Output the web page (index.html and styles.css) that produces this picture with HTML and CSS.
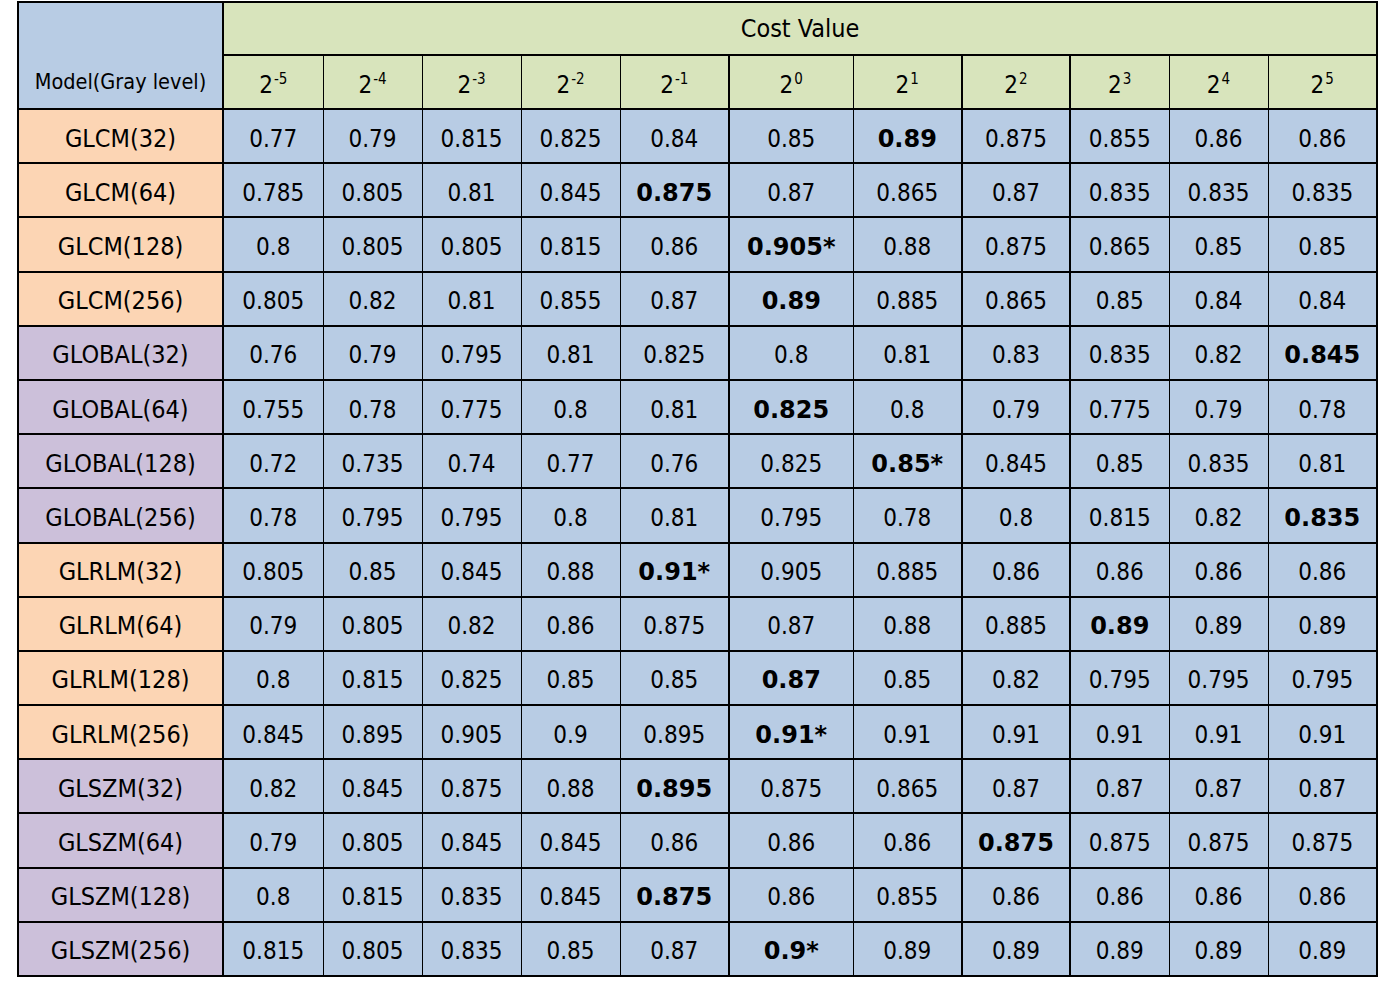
FILE: index.html
```html
<!DOCTYPE html>
<html>
<head>
<meta charset="utf-8">
<link rel="stylesheet" href="styles.css">
</head>
<body>
<table class="grid">
  <colgroup>
    <col class="c-model">
    <col class="c-100"><col class="c-99"><col class="c-99"><col class="c-99">
    <col class="c-109"><col class="c-124"><col class="c-109"><col class="c-108">
    <col class="c-99"><col class="c-99"><col class="c-109">
  </colgroup>
  <thead>
    <tr class="h1">
      <th class="model-head" rowspan="2">Model(Gray level)</th>
      <th class="cost" colspan="11">Cost Value</th>
    </tr>
    <tr class="h2">
      <th>2<sup>-5</sup></th>
      <th>2<sup>-4</sup></th>
      <th>2<sup>-3</sup></th>
      <th>2<sup>-2</sup></th>
      <th>2<sup>-1</sup></th>
      <th class="tl">2<sup>0</sup></th>
      <th>2<sup>1</sup></th>
      <th class="tl">2<sup>2</sup></th>
      <th class="tl">2<sup>3</sup></th>
      <th>2<sup>4</sup></th>
      <th>2<sup>5</sup></th>
    </tr>
  </thead>
  <tbody>
    <tr class="o"><td class="m">GLCM(32)</td><td>0.77</td><td>0.79</td><td>0.815</td><td>0.825</td><td>0.84</td><td class="tl">0.85</td><td><b>0.89</b></td><td class="tl">0.875</td><td class="tl">0.855</td><td>0.86</td><td>0.86</td></tr>
    <tr class="o"><td class="m">GLCM(64)</td><td>0.785</td><td>0.805</td><td>0.81</td><td>0.845</td><td><b>0.875</b></td><td class="tl">0.87</td><td>0.865</td><td class="tl">0.87</td><td class="tl">0.835</td><td>0.835</td><td>0.835</td></tr>
    <tr class="o"><td class="m">GLCM(128)</td><td>0.8</td><td>0.805</td><td>0.805</td><td>0.815</td><td>0.86</td><td class="tl"><b>0.905*</b></td><td>0.88</td><td class="tl">0.875</td><td class="tl">0.865</td><td>0.85</td><td>0.85</td></tr>
    <tr class="o"><td class="m">GLCM(256)</td><td>0.805</td><td>0.82</td><td>0.81</td><td>0.855</td><td>0.87</td><td class="tl"><b>0.89</b></td><td>0.885</td><td class="tl">0.865</td><td class="tl">0.85</td><td>0.84</td><td>0.84</td></tr>
    <tr class="p"><td class="m">GLOBAL(32)</td><td>0.76</td><td>0.79</td><td>0.795</td><td>0.81</td><td>0.825</td><td class="tl">0.8</td><td>0.81</td><td class="tl">0.83</td><td class="tl">0.835</td><td>0.82</td><td><b>0.845</b></td></tr>
    <tr class="p"><td class="m">GLOBAL(64)</td><td>0.755</td><td>0.78</td><td>0.775</td><td>0.8</td><td>0.81</td><td class="tl"><b>0.825</b></td><td>0.8</td><td class="tl">0.79</td><td class="tl">0.775</td><td>0.79</td><td>0.78</td></tr>
    <tr class="p"><td class="m">GLOBAL(128)</td><td>0.72</td><td>0.735</td><td>0.74</td><td>0.77</td><td>0.76</td><td class="tl">0.825</td><td><b>0.85*</b></td><td class="tl">0.845</td><td class="tl">0.85</td><td>0.835</td><td>0.81</td></tr>
    <tr class="p"><td class="m">GLOBAL(256)</td><td>0.78</td><td>0.795</td><td>0.795</td><td>0.8</td><td>0.81</td><td class="tl">0.795</td><td>0.78</td><td class="tl">0.8</td><td class="tl">0.815</td><td>0.82</td><td><b>0.835</b></td></tr>
    <tr class="o"><td class="m">GLRLM(32)</td><td>0.805</td><td>0.85</td><td>0.845</td><td>0.88</td><td><b>0.91*</b></td><td class="tl">0.905</td><td>0.885</td><td class="tl">0.86</td><td class="tl">0.86</td><td>0.86</td><td>0.86</td></tr>
    <tr class="o"><td class="m">GLRLM(64)</td><td>0.79</td><td>0.805</td><td>0.82</td><td>0.86</td><td>0.875</td><td class="tl">0.87</td><td>0.88</td><td class="tl">0.885</td><td class="tl"><b>0.89</b></td><td>0.89</td><td>0.89</td></tr>
    <tr class="o"><td class="m">GLRLM(128)</td><td>0.8</td><td>0.815</td><td>0.825</td><td>0.85</td><td>0.85</td><td class="tl"><b>0.87</b></td><td>0.85</td><td class="tl">0.82</td><td class="tl">0.795</td><td>0.795</td><td>0.795</td></tr>
    <tr class="o"><td class="m">GLRLM(256)</td><td>0.845</td><td>0.895</td><td>0.905</td><td>0.9</td><td>0.895</td><td class="tl"><b>0.91*</b></td><td>0.91</td><td class="tl">0.91</td><td class="tl">0.91</td><td>0.91</td><td>0.91</td></tr>
    <tr class="p"><td class="m">GLSZM(32)</td><td>0.82</td><td>0.845</td><td>0.875</td><td>0.88</td><td><b>0.895</b></td><td class="tl">0.875</td><td>0.865</td><td class="tl">0.87</td><td class="tl">0.87</td><td>0.87</td><td>0.87</td></tr>
    <tr class="p"><td class="m">GLSZM(64)</td><td>0.79</td><td>0.805</td><td>0.845</td><td>0.845</td><td>0.86</td><td class="tl">0.86</td><td>0.86</td><td class="tl"><b>0.875</b></td><td class="tl">0.875</td><td>0.875</td><td>0.875</td></tr>
    <tr class="p"><td class="m">GLSZM(128)</td><td>0.8</td><td>0.815</td><td>0.835</td><td>0.845</td><td><b>0.875</b></td><td class="tl">0.86</td><td>0.855</td><td class="tl">0.86</td><td class="tl">0.86</td><td>0.86</td><td>0.86</td></tr>
    <tr class="p"><td class="m">GLSZM(256)</td><td>0.815</td><td>0.805</td><td>0.835</td><td>0.85</td><td>0.87</td><td class="tl"><b>0.9*</b></td><td>0.89</td><td class="tl">0.89</td><td class="tl">0.89</td><td>0.89</td><td>0.89</td></tr>
  </tbody>
</table>
</body>
</html>
```

FILE: styles.css
```css
html, body {
  margin: 0;
  padding: 0;
  background: #ffffff;
}

body {
  padding: 1px 0 0 17px;
  font-family: "DejaVu Sans Condensed", "DejaVu Sans", sans-serif;
  font-stretch: semi-condensed;
  color: #000000;
}

.grid {
  border-collapse: collapse;
  table-layout: fixed;
  width: 1359px;
  border: 2px solid #000000;
}

.c-model { width: 205px; }
.c-100 { width: 100px; }
.c-99 { width: 99px; }
.c-108 { width: 108px; }
.c-109 { width: 109px; }
.c-124 { width: 124px; }

.grid th,
.grid td {
  border-left: 1px solid #000000;
  border-right: 1px solid #000000;
  border-top: 2px solid #000000;
  border-bottom: 2px solid #000000;
  padding: 5px 0 0 0;
  text-align: center;
  vertical-align: middle;
  font-weight: normal;
  font-size: 24px;
  line-height: 28px;
  white-space: nowrap;
  background: #b8cce4;
}

.grid td.m {
  font-size: 25px;
}

.grid .tl {
  border-left: 2px solid #000000;
}

.grid td.m,
.grid th.model-head {
  border-right: 2px solid #000000;
}

.h1 { height: 53px; }
.h2 { height: 54px; }
tbody tr { height: 54.2px; }

.grid th.cost {
  background: #d8e4bc;
  font-size: 25px;
  padding-top: 0;
}

.h2 th {
  background: #d8e4bc;
}

.grid th.model-head {
  background: #b8cce4;
  font-size: 21.5px;
  vertical-align: bottom;
  padding: 0 0 12px 0;
}

sup {
  font-size: 15px;
  line-height: 0;
  vertical-align: 9px;
  margin-left: 1px;
}

.o td.m { background: #fcd5b4; }
.p td.m { background: #ccc0da; }

b {
  font-weight: bold;
  font-family: "DejaVu Sans", sans-serif;
  font-stretch: normal;
}
```
